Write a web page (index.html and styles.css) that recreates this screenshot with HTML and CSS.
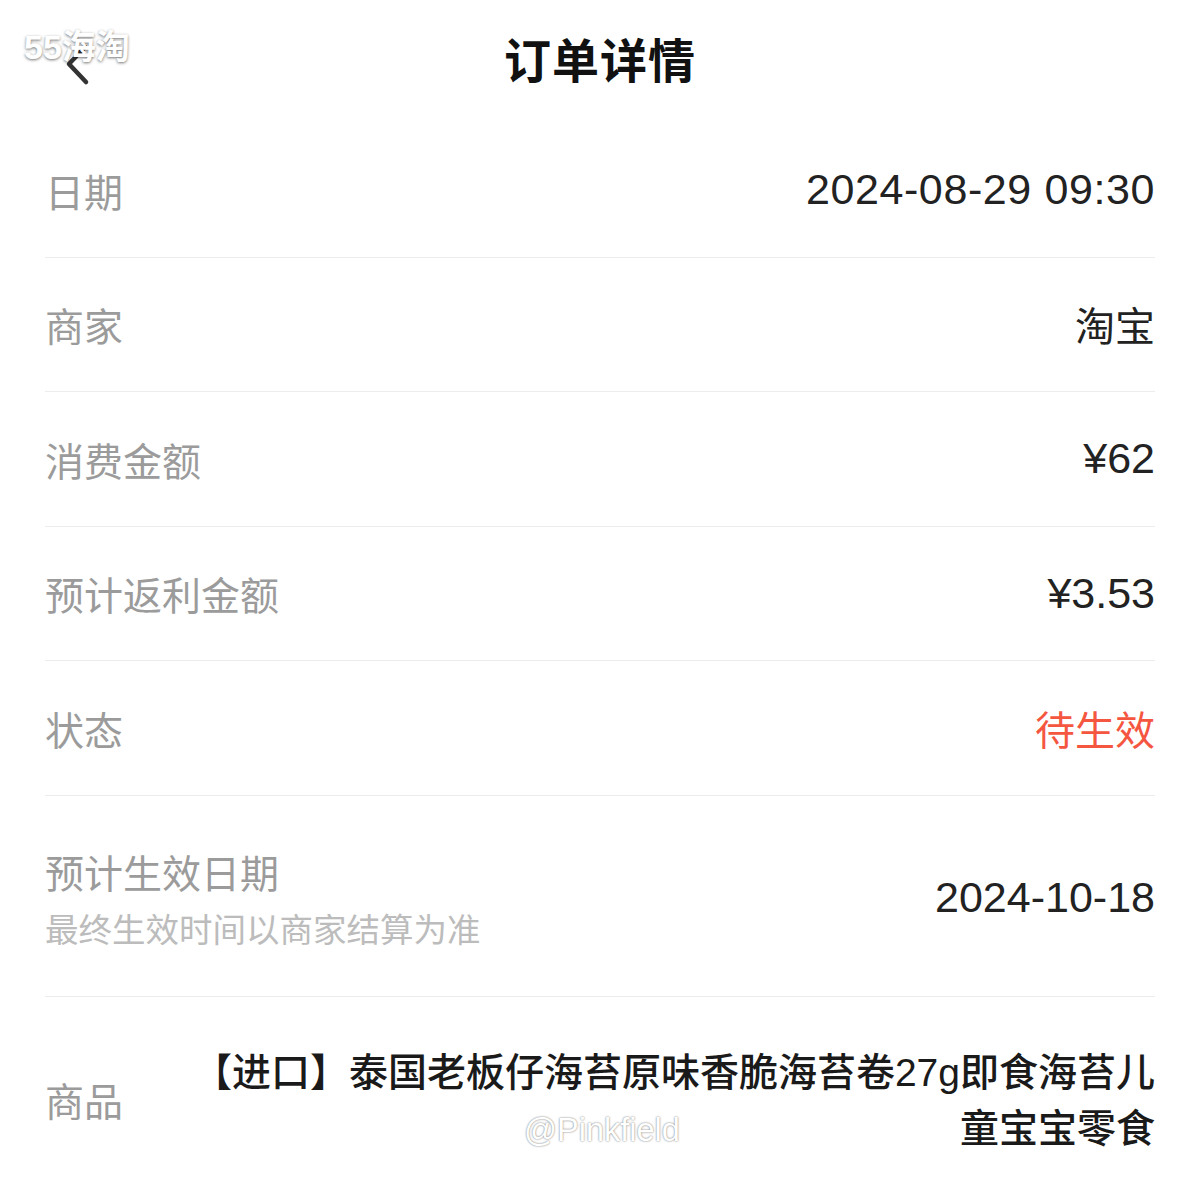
FILE: index.html
```html
<!DOCTYPE html>
<html>
<head>
<meta charset="utf-8">
<link rel="stylesheet" href="styles.css">
</head>
<body>

<div class="page">
    <div class="header">
        <span class="back">
            <svg width="40" height="50" viewBox="0 0 40 50">
                <polyline points="21,7 5,24 22,42" fill="none" stroke="#333" stroke-width="4.5" stroke-linecap="round" stroke-linejoin="round"/>
            </svg>
        </span>
        <h1 class="title">订单详情</h1>
    </div>

    <div class="list">
        <div class="row">
            <span class="label">日期</span>
            <span class="value num date-time">2024-08-29 09:30</span>
        </div>
        <div class="row">
            <span class="label">商家</span>
            <span class="value">淘宝</span>
        </div>
        <div class="row">
            <span class="label">消费金额</span>
            <span class="value num">¥62</span>
        </div>
        <div class="row">
            <span class="label">预计返利金额</span>
            <span class="value num">¥3.53</span>
        </div>
        <div class="row">
            <span class="label">状态</span>
            <span class="value status">待生效</span>
        </div>
        <div class="row row-tall">
            <div class="label-group">
                <span class="label">预计生效日期</span>
                <span class="hint">最终生效时间以商家结算为准</span>
            </div>
            <span class="value num">2024-10-18</span>
        </div>
        <div class="row row-goods">
            <span class="label">商品</span>
            <span class="value goods">【进口】泰国老板仔海苔原味香脆海苔卷27g即食海苔儿<br>童宝宝零食</span>
        </div>
    </div>

    <span class="mark mark-top">55海淘</span>
    <span class="mark mark-bottom">@Pinkfield</span>
</div>

</body>
</html>
```

FILE: styles.css
```css
body {
    margin: 0;
    background-color: #fff;
    font-family: "Liberation Sans", "Noto Sans CJK SC", sans-serif;
    color: #222;
}

.page {
    position: relative;
    width: 1200px;
    min-height: 1179px;
    overflow: hidden;
}

.header {
    position: relative;
    height: 123px;
    display: flex;
    align-items: center;
    justify-content: center;
}

.title {
    margin: 0 0 8px;
    font-size: 47px;
    font-weight: bold;
    color: #111;
    letter-spacing: 1px;
}

.back {
    position: absolute;
    left: 64px;
    top: 40px;
}

.list {
    margin: 0 45px;
}

.row {
    box-sizing: border-box;
    height: 134.5px;
    display: flex;
    justify-content: space-between;
    align-items: center;
    border-bottom: 1px solid #ececec;
}

.row-tall {
    height: 201px;
    padding-top: 14px;
}

.row-goods {
    height: auto;
    padding: 44px 0 40px;
    border-bottom: none;
}

.label {
    font-size: 39px;
    color: #9b9b9b;
    white-space: nowrap;
}

.label-group {
    display: flex;
    flex-direction: column;
}

.label-group .label {
    line-height: 56px;
}

.hint {
    font-size: 33.5px;
    line-height: 56px;
    color: #bcbcbc;
}

.value {
    font-size: 40px;
    color: #222;
    text-align: right;
}

.num {
    font-size: 43px;
}

.date-time {
    letter-spacing: 0.6px;
}

.row-tall .num {
    margin-bottom: 10px;
}

.status {
    color: #f4563f;
}

.goods {
    flex: 1;
    margin-left: 30px;
    padding-top: 4px;
    font-size: 39px;
    line-height: 56px;
    font-weight: 500;
    color: #1a1a1a;
}

.mark {
    position: absolute;
    color: #fff;
    text-shadow: 0 1px 3px rgba(0, 0, 0, 0.55);
}

.mark-top {
    left: 24px;
    top: 20px;
    font-size: 34px;
    font-weight: bold;
}

.mark-bottom {
    left: 524px;
    top: 1112px;
    font-size: 32.5px;
    text-shadow: 0 0 2px rgba(0, 0, 0, 0.6);
}
```
